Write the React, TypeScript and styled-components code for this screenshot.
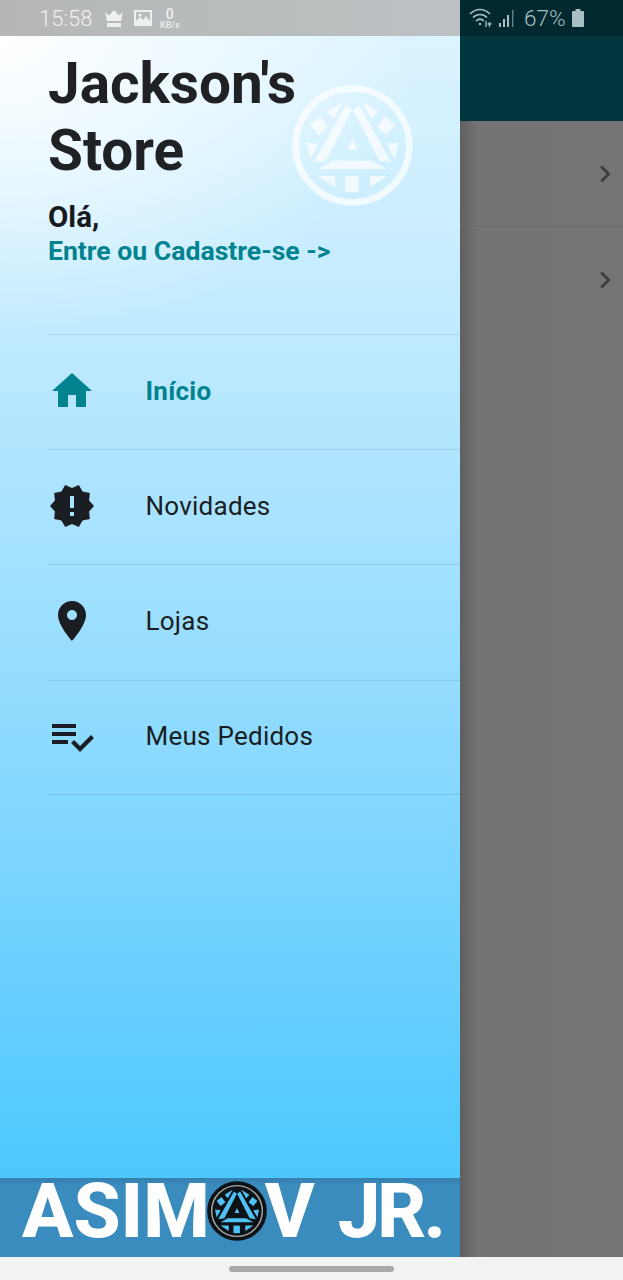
import React from "react";
import styled, { createGlobalStyle } from "styled-components";

const Global = createGlobalStyle`
  html, body { margin: 0; padding: 0; background: #f2f2f2; }
  body { font-family: Roboto, "Liberation Sans", sans-serif; }
  * { box-sizing: border-box; }
`;

const Page = styled.div`
  width: 623px;
  height: 1280px;
  display: flex;
  flex-direction: column;
  overflow: hidden;
`;

const StatusBar = styled.div`
  height: 36px;
  display: flex;
  flex: none;
`;
const StatusLeft = styled.div`
  width: 460px;
  display: flex;
  align-items: center;
  padding-left: 39px;
  background: linear-gradient(90deg, #b5b7b7, #bcc1c3);
  color: #eef0f0;
`;
const StatusRight = styled.div`
  flex: 1;
  display: flex;
  align-items: center;
  padding-left: 9px;
  background: #01292f;
  color: #a9c0c3;
`;
const Clock = styled.span`
  font-size: 22px;
  font-weight: 300;
  width: 65px;
`;
const SpeedBox = styled.div`
  display: flex;
  flex-direction: column;
  align-items: center;
  margin-left: 8px;
`;
const SpeedValue = styled.span`
  font-size: 14px;
  line-height: 14px;
  height: 14px;
  font-weight: 500;
`;
const SpeedUnit = styled.span`
  font-size: 9px;
  line-height: 9px;
  height: 9px;
  font-weight: 500;
`;
const Percent = styled.span`
  font-size: 22.5px;
  font-weight: 300;
  margin: 0 6px 0 9px;
`;
const StatusIcon = styled.svg<{ $gap?: number }>`
  display: block;
  flex: none;
  margin-left: ${(p) => p.$gap ?? 0}px;
`;

const Body = styled.div`
  flex: 1;
  display: flex;
  min-height: 0;
`;

const Drawer = styled.aside`
  position: relative;
  width: 460px;
  display: flex;
  flex-direction: column;
  background:
    radial-gradient(ellipse 420px 300px at 0 0, #ffffff 0%, rgba(255, 255, 255, 0) 100%),
    linear-gradient(180deg, #dcf4ff 0%, #c0eaff 24%, #86d8ff 62%, #40c4ff 100%);
`;
const Header = styled.header`
  height: 298px;
  padding: 14px 0 0 48px;
  flex: none;
`;
const Title = styled.h1`
  margin: 0;
  width: 260px;
  font-size: 56.7px;
  line-height: 67px;
  font-weight: 700;
  color: #1f2124;
`;
const Greeting = styled.div`
  margin-top: 17px;
  font-size: 29.5px;
  line-height: 32px;
  font-weight: 700;
  color: #17191c;
`;
const SignIn = styled.div`
  margin-top: 2px;
  font-size: 26.6px;
  line-height: 32px;
  font-weight: 700;
  color: #00838f;
`;
const Watermark = styled.div`
  position: absolute;
  left: 290px;
  top: 47px;
  opacity: 0.72;
`;

const Menu = styled.nav`
  margin-left: 48px;
  flex: none;
`;
const MenuRow = styled.div<{ $active?: boolean }>`
  height: 115.2px;
  display: flex;
  align-items: center;
  border-top: 1px solid rgba(30, 60, 80, 0.12);
  color: ${(p) => (p.$active ? "#00838f" : "#1a1d21")};
  &:last-child {
    border-bottom: 1px solid rgba(30, 60, 80, 0.12);
  }
`;
const MenuIcon = styled.svg`
  width: 48px;
  height: 48px;
  flex: none;
  margin-top: -2px;
  fill: currentColor;
`;
const MenuLabel = styled.span<{ $active?: boolean }>`
  margin: -2px 0 0 49.5px;
  font-size: 26px;
  font-weight: ${(p) => (p.$active ? 700 : 400)};
  letter-spacing: 0.25px;
`;

const Banner = styled.footer`
  margin-top: auto;
  height: 79px;
  flex: none;
  display: flex;
  align-items: flex-start;
  padding: 0 0 0 22px;
  background: linear-gradient(180deg, #3580ae 0, #3a8cbf 8px, #3a8cbf 100%);
`;
const BannerText = styled.span<{ $gap?: number; $tight?: number }>`
  margin-left: ${(p) => p.$gap ?? 0}px;
  letter-spacing: ${(p) => p.$tight ?? 0}px;
  font-size: 76px;
  line-height: 66px;
  font-weight: 800;
  color: #ffffff;
  white-space: pre;
`;
const BannerEmblem = styled.div`
  margin: 3px -2px 0 -3px;
  flex: none;
`;

const Backdrop = styled.main`
  flex: 1;
  display: flex;
  flex-direction: column;
  background: linear-gradient(90deg, #5f5f5f 0, #747474 18px, #757575 100%);
`;
const AppBar = styled.div`
  height: 85px;
  flex: none;
  background: #01363f;
`;
const ListRow = styled.div<{ $divider?: boolean }>`
  height: 106px;
  flex: none;
  display: flex;
  align-items: center;
  justify-content: flex-end;
  padding-right: 1px;
  border-bottom: ${(p) => (p.$divider ? "1px solid #6c6c6c" : "none")};
  color: #3f3f3f;
`;
const Chevron = styled.svg`
  width: 34px;
  height: 34px;
  fill: currentColor;
`;

const NavBar = styled.div`
  height: 23px;
  flex: none;
  display: flex;
  align-items: center;
  justify-content: center;
  background: #f2f2f2;
`;
const NavHandle = styled.div`
  width: 165px;
  height: 6px;
  border-radius: 3px;
  background: #a8a8a8;
`;

function Emblem({ size, fg, ring, disc }: { size: number; fg: string; ring: string; disc?: string }) {
  const shapes = [
    "228,105 246,120 168,272 130,278",
    "266,105 248,120 326,272 364,278",
    "145,297 190,272 304,272 350,297",
    "247,208 262,240 232,240",
    "145,318 195,318 195,352",
    "349,318 299,318 299,352",
    "225,318 265,318 265,365 225,365",
    "170,125 220,95 190,148",
    "324,125 274,95 304,148",
    "120,165 150,140 175,172 145,196",
    "374,165 344,140 319,172 349,196",
    "110,218 145,222 120,268",
    "384,218 349,222 374,268",
  ];
  return (
    <svg width={size} height={size} viewBox="60 40 374 374" aria-hidden="true" style={{ display: "block" }}>
      {disc && <circle cx="247" cy="227" r="186" fill={disc} />}
      <circle cx="247" cy="227" r={disc ? 158 : 170} fill="none" stroke={ring} strokeWidth={disc ? 9 : 20} />
      {shapes.map((s) => (
        <polygon key={s} points={s} fill={fg} />
      ))}
    </svg>
  );
}

const items = [
  {
    label: "Início",
    active: true,
    d: "M10 20v-6h4v6h5v-8h3L12 3 2 12h3v8z",
  },
  {
    label: "Novidades",
    d: "M23 12l-2.44-2.79.34-3.69-3.61-.82-1.89-3.2L12 2.96 8.6 1.5 6.71 4.69 3.1 5.5l.34 3.7L1 12l2.44 2.79-.34 3.7 3.61.82L8.6 22.5l3.4-1.47 3.4 1.46 1.89-3.19 3.61-.82-.34-3.69L23 12zm-10 5h-2v-2h2v2zm0-4h-2V7h2v6z",
  },
  {
    label: "Lojas",
    d: "M12 2C8.13 2 5 5.13 5 9c0 5.25 7 13 7 13s7-7.75 7-13c0-3.87-3.13-7-7-7zm0 9.5c-1.38 0-2.5-1.12-2.5-2.5s1.12-2.5 2.5-2.5 2.5 1.12 2.5 2.5-1.12 2.5-2.5 2.5z",
  },
  {
    label: "Meus Pedidos",
    d: "M14 10H2v2h12v-2zm0-4H2v2h12V6zM2 16h8v-2H2v2zm19.5-4.5L23 13l-6.99 7-4.51-4.5L13 14l3.01 3 5.49-5.5z",
  },
];

export default function App() {
  return (
    <Page>
      <Global />
      <StatusBar>
        <StatusLeft>
          <Clock>15:58</Clock>
          <StatusIcon width="20" height="19" viewBox="0 0 20 19" fill="currentColor">
            <path d="M1 3l4 3.5L10 1l5 5.5L19 3l-2 9H3z" />
            <rect x="3" y="14" width="14" height="4" />
          </StatusIcon>
          <StatusIcon $gap={10} width="18" height="18" viewBox="0 0 18 18" fill="currentColor">
            <path fillRule="evenodd" d="M0 1h18v16H0zM2 3v9l4-4 3 3 3-4 4 5V3z" />
            <circle cx="6" cy="6" r="1.6" />
          </StatusIcon>
          <SpeedBox>
            <SpeedValue>0</SpeedValue>
            <SpeedUnit>KB/s</SpeedUnit>
          </SpeedBox>
        </StatusLeft>
        <StatusRight>
          <StatusIcon width="24" height="20" viewBox="0 0 24 20" fill="none" stroke="currentColor" strokeWidth="1.6">
            <path d="M1 6c6-6 14-6 20 0M4 9.5c4-4 10-4 14 0M7 13c2.4-2.2 5.6-2.2 8 0" />
            <circle cx="11" cy="16" r="1.2" fill="currentColor" stroke="none" />
            <path d="M17 13v6M20.5 14v5M18.5 16h4" strokeWidth="1.3" />
          </StatusIcon>
          <StatusIcon $gap={6} width="16" height="19" viewBox="0 0 16 19" fill="currentColor">
            <rect x="0" y="14" width="2" height="4" />
            <rect x="4" y="10" width="2" height="8" />
            <rect x="8" y="6" width="2" height="12" />
            <rect x="13" y="1" width="1.4" height="17" opacity="0.6" />
          </StatusIcon>
          <Percent>67%</Percent>
          <StatusIcon width="12" height="18" viewBox="0 0 12 18" fill="currentColor">
            <rect x="3.5" y="0" width="5" height="2" />
            <rect x="0" y="2" width="12" height="16" rx="1" />
          </StatusIcon>
        </StatusRight>
      </StatusBar>
      <Body>
        <Drawer>
          <Header>
            <Title>Jackson's Store</Title>
            <Greeting>Olá,</Greeting>
            <SignIn>{"Entre ou Cadastre-se ->"}</SignIn>
          </Header>
          <Watermark>
            <Emblem size={125} fg="#ffffff" ring="#ffffff" />
          </Watermark>
          <Menu>
            {items.map((it) => (
              <MenuRow key={it.label} $active={it.active}>
                <MenuIcon viewBox="0 0 24 24">
                  <path d={it.d} />
                </MenuIcon>
                <MenuLabel $active={it.active}>{it.label}</MenuLabel>
              </MenuRow>
            ))}
          </Menu>
          <Banner>
            <BannerText>ASIM</BannerText>
            <BannerEmblem>
              <Emblem size={60} fg="#4fc3f7" ring="#a8a8a8" disc="#0c1216" />
            </BannerEmblem>
            <BannerText>V</BannerText>
            <BannerText $gap={23} $tight={-3}>JR.</BannerText>
          </Banner>
        </Drawer>
        <Backdrop>
          <AppBar />
          <ListRow $divider>
            <Chevron viewBox="0 0 24 24">
              <path d="M10 6L8.59 7.41 13.17 12l-4.58 4.59L10 18l6-6z" />
            </Chevron>
          </ListRow>
          <ListRow>
            <Chevron viewBox="0 0 24 24">
              <path d="M10 6L8.59 7.41 13.17 12l-4.58 4.59L10 18l6-6z" />
            </Chevron>
          </ListRow>
        </Backdrop>
      </Body>
      <NavBar>
        <NavHandle />
      </NavBar>
    </Page>
  );
}
